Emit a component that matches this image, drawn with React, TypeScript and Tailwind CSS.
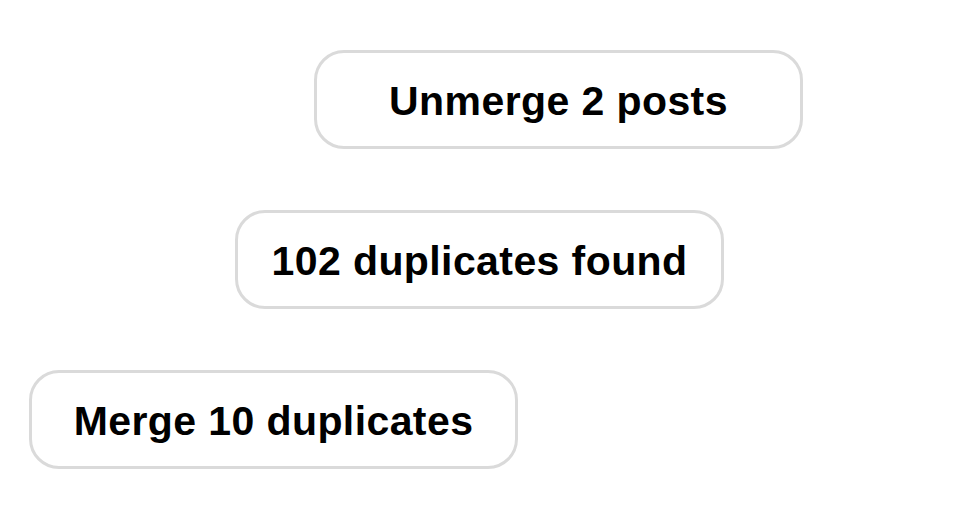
import React from 'react';

interface PillProps {
  label: string;
  offset: string;
}

const Pill: React.FC<PillProps> = ({ label, offset }) => (
  <div
    className={`${offset} flex h-[99px] w-[489px] items-center justify-center rounded-[30px] border-[3px] border-[#dadada] bg-white pt-[3px]`}
  >
    <span className="text-[41px] font-bold leading-none tracking-[0.01em] text-black">{label}</span>
  </div>
);

export default function App() {
  return (
    <div
      className="flex h-[520px] w-[960px] flex-col gap-[61px] bg-white pt-[50px]"
      style={{ fontFamily: '"Liberation Sans", Arial, sans-serif' }}
    >
      <Pill label="Unmerge 2 posts" offset="ml-[314px]" />
      <Pill label="102 duplicates found" offset="ml-[235px]" />
      <Pill label="Merge 10 duplicates" offset="ml-[29px]" />
    </div>
  );
}
